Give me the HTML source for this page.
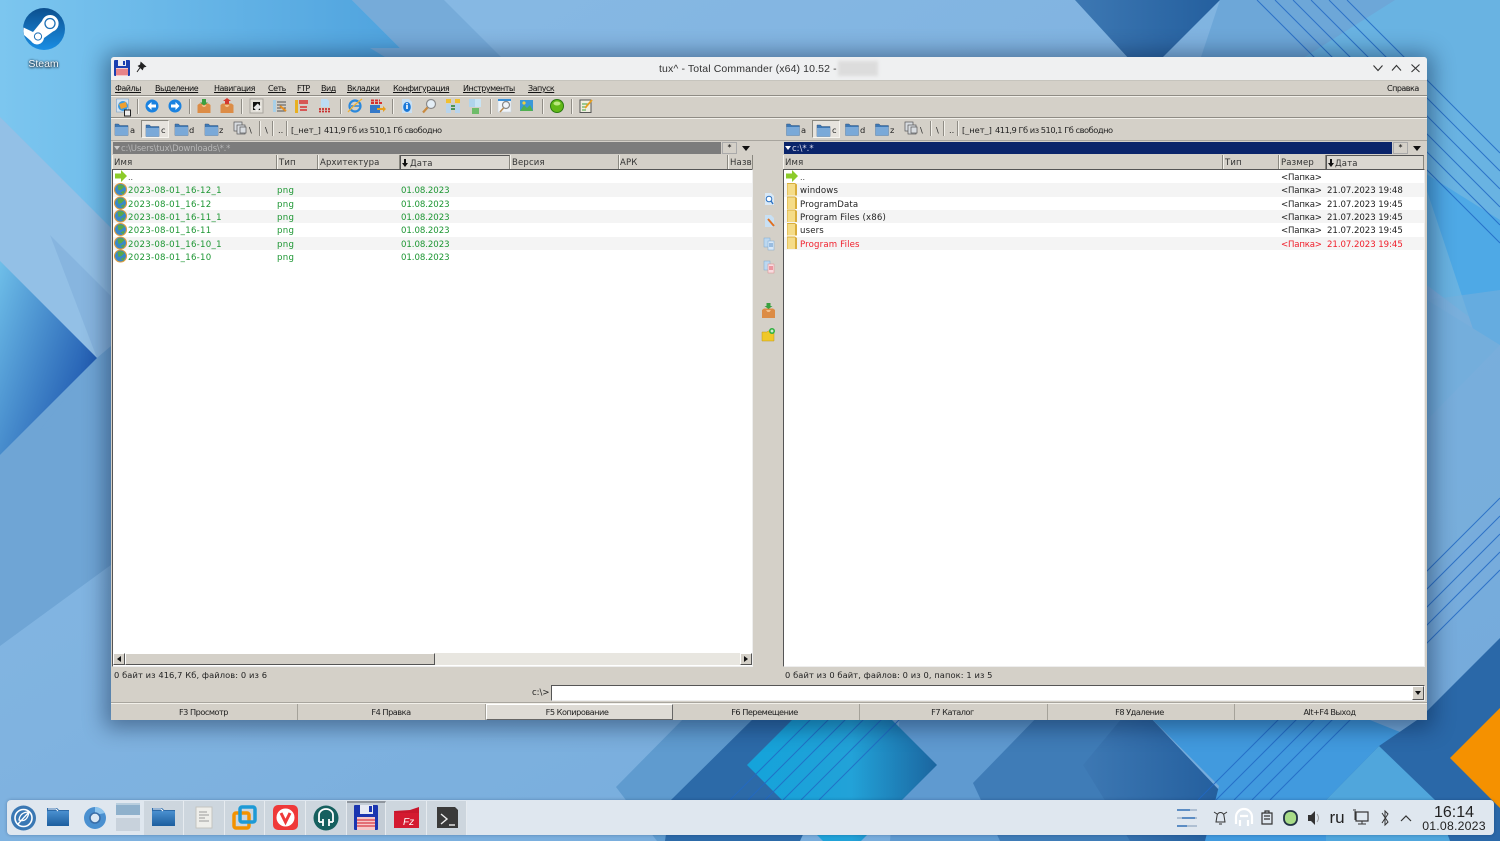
<!DOCTYPE html>
<html lang="ru"><head><meta charset="utf-8"><title>Total Commander</title>
<style>
html,body{margin:0;padding:0;width:1500px;height:841px;overflow:hidden;background:#7fb2df}
body{position:relative;font-family:"DejaVu Sans","Liberation Sans",sans-serif}
.a,.t{position:absolute}
.t{white-space:nowrap;line-height:12px;height:12px;font-size:8.5px;color:#222;filter:blur(.25px)}
#win{position:absolute;left:111px;top:57px;width:1316px;height:663px;background:#d4d0c8;box-shadow:0 2px 22px 6px rgba(0,20,50,.42);border-radius:3px 3px 0 0}
.m{font-size:8px;top:83px;letter-spacing:-.5px;text-decoration:underline;text-decoration-thickness:.5px;text-underline-offset:1px;color:#111}
.h{top:157px;font-size:8.5px;color:#333;letter-spacing:.17px}
.g{color:#1c9632;letter-spacing:.27px;font-size:8.6px}
.gd{color:#1c9632;letter-spacing:-.07px;font-size:8.6px}
.k{color:#222;letter-spacing:.14px;font-size:8.6px}
.kp{color:#222;letter-spacing:-.2px;font-size:8.6px}
.kd{color:#222;letter-spacing:-.06px;font-size:8.6px}
.r{color:#f0202c;letter-spacing:.14px;font-size:8.6px}
.rp{color:#f0202c;letter-spacing:-.2px;font-size:8.6px}
.rd{color:#f0202c;letter-spacing:-.06px;font-size:8.6px}
.d{font-size:8.3px;letter-spacing:-.05px;color:#222;top:123.5px}
.f{top:706px;font-size:8.2px;letter-spacing:-.5px;color:#222;text-align:center}
.sep{position:absolute;top:99px;width:1px;height:15px;background:#8f8c85;border-right:1px solid #f2f0ea}
.hc{position:absolute;top:155px;height:14px;background:#d4d0c8;border-right:1px solid #8a8880;border-left:1px solid #f4f2ec;box-sizing:border-box}
.row{position:absolute;height:13.33px;background:#f4f4f4}
svg.i{position:absolute;overflow:visible}
.fk{position:absolute;top:704px;height:16px;border-right:1px solid #a5a29a;box-sizing:border-box}
.cell{position:absolute;top:801px;height:34px;background:#cdd6de;border-right:1px solid #e6ebf0;box-sizing:border-box}
</style></head><body>

<!-- wallpaper -->
<svg class="a" style="left:0;top:0" width="1500" height="841" viewBox="0 0 1500 841">
<defs>
<linearGradient id="bg" x1="0" y1="0" x2="1" y2="1"><stop offset="0" stop-color="#8abbe5"/><stop offset="1" stop-color="#73a9da"/></linearGradient>
<linearGradient id="sky" x1="0" y1="0" x2="1" y2="0"><stop offset="0" stop-color="#7cc6ef"/><stop offset="1" stop-color="#4fa3de"/></linearGradient>
<linearGradient id="tri" x1="0" y1="0" x2="1" y2=".7"><stop offset="0" stop-color="#6fbfe9"/><stop offset="1" stop-color="#1a52ac"/></linearGradient>
<linearGradient id="cy" x1="0" y1="0" x2="1" y2="0"><stop offset="0" stop-color="#14a3da"/><stop offset=".55" stop-color="#22a2d8"/><stop offset="1" stop-color="#1b659f"/></linearGradient>
<linearGradient id="dk" x1="0" y1="0" x2="1" y2="0"><stop offset="0" stop-color="#3d78b3"/><stop offset="1" stop-color="#245f9e"/></linearGradient>
</defs>
<rect width="1500" height="841" fill="url(#bg)"/>
<polygon points="0,0 352,0 400,48 400,70 112,229 0,117" fill="url(#sky)"/>
<polygon points="352,0 444,0 510,66 400,66 370,48 400,48" fill="#76abd9"/>
<polygon points="0,117 130,247 130,391 97,358 0,261" fill="#93c0e6"/>
<polygon points="50,235 130,315 130,391 97,358" fill="#87b5df"/>
<polygon points="130,330 200,385 200,500 0,646 0,455 97,358" fill="#6fa5d5"/>
<polygon points="97,358 130,330 130,400 40,430" fill="#6fa5d5"/>
<polygon points="0,261 97,358 0,455" fill="url(#tri)"/>
<polygon points="1075,0 1220,0 1160,60 1130,60" fill="url(#dk)"/>
<polygon points="1220,0 1500,0 1500,200 1200,60" fill="#6da7d8"/>
<polygon points="1300,60 1395,0 1500,0 1500,340 1420,280" fill="#69b3e2"/>
<polygon points="1420,170 1500,220 1500,345 1480,350" fill="#4ea9e6"/>
<polygon points="1427,300 1500,345 1427,420" fill="#6fadde"/>
<polygon points="1500,290 1427,300 1427,580 1500,500" fill="#78aedb" opacity=".55"/>
<polygon points="900,712 1060,712 985,800 1000,841 890,841" fill="#5f9ad0"/>
<polygon points="616,787 690,712 800,712 740,845 660,845" fill="#5f9bcf"/>
<polygon points="760,712 671,800 665,841 800,841 860,712" fill="#2c6aa8"/>
<polygon points="747,765 842,670 937,765 842,860" fill="url(#cy)"/>
<polygon points="1042,712 973,783 1000,841 1200,841 1219,790 1145,712" fill="#3f7cb7"/>
<polygon points="1127,712 1083,765 1130,841 1215,841 1219,790 1145,712" fill="url(#dk)"/>
<polygon points="1145,712 1219,786 1205,841 1355,841 1420,740 1350,712" fill="#419ade"/>
<polygon points="1500,638 1420,718 1379,746 1326,800 1326,841 1500,841" fill="#2a68a8"/>
<polygon points="1379,746 1326,800 1326,841 1450,841 1435,800" fill="#50a6dc"/>
<polygon points="1450,758 1500,708 1500,808" fill="#f59100"/>
<g stroke="#2268c4" stroke-width="1" fill="none" opacity=".85">
<path d="M1257,0L1500,243M1275,0L1500,225M1293,0L1500,207M1311,0L1500,189M1329,0L1500,171M1347,0L1500,153"/>
<path d="M1500,498L1198,800M1500,516L1216,800M1500,534L1234,800M1500,552L1252,800M1500,570L1270,800"/>
<path d="M830,700L730,800M848,700L748,800M865,700L765,800M883,700L783,800M901,700L801,800M919,700L819,800"/>
</g>
<!-- steam -->
<defs><linearGradient id="st" x1="0" y1="0" x2="0" y2="1"><stop offset="0" stop-color="#0c4f8e"/><stop offset="1" stop-color="#1a8ee4"/></linearGradient></defs>
<circle cx="44" cy="29" r="21" fill="url(#st)"/>
<path d="M23.500,27.500 L33,32 L42,21 A8.500,8.500 0 1 1 53,31.500 L44,38 A7,7 0 0 1 31,41 L24,35 Q23,31 23.500,27.500 Z" fill="#fff"/>
<circle cx="50" cy="23.500" r="5" fill="#fff" stroke="#1d6fb5" stroke-width="1.300"/>
<circle cx="38" cy="36.500" r="3.600" fill="#fff" stroke="#1d6fb5" stroke-width="1"/>
</svg>
<div class="t" style="left:0;width:87px;text-align:center;top:58px;font:10.500px/12px 'Liberation Sans',sans-serif;color:#f4f8fb;text-shadow:0 1px 2px #123,0 0 2px #123">Steam</div>

<!-- window -->
<div id="win"></div>
<div class="a" style="left:111px;top:57px;width:1316px;height:23px;background:#eff0f1;border-radius:3px 3px 0 0"></div>
<div class="a" style="left:111px;top:80px;width:1316px;height:1px;background:#c6c4bd"></div>
<svg class="i" style="left:114px;top:60px" width="16" height="16" viewBox="0 0 16 16"><rect width="16" height="16" rx="1" fill="#1a3fb0"/><rect x="4" y="0" width="8" height="6" fill="#e8ecf4"/><rect x="9" y="1" width="2" height="4" fill="#1a3fb0"/><rect x="2" y="8" width="12" height="8" fill="#f6c8c8"/><path d="M2,10H14M2,12H14M2,14H14" stroke="#d8404a" stroke-width="1"/></svg>
<svg class="i" style="left:136px;top:62px" width="10" height="11" viewBox="0 0 10 11"><path d="M5,.5L9.500,4.500L7.500,5L6.500,7.500L2.500,4L4.500,3ZM3.800,6L1,10" stroke="#222" fill="#222" stroke-width="1"/></svg>
<div class="t" style="left:659px;top:62.500px;font:10.500px/12px 'Liberation Sans',sans-serif;color:#333;letter-spacing:.12px">tux^ - Total Commander (x64) 10.52 -</div>
<div class="a" style="left:838px;top:61px;width:40px;height:15px;background:#dcdcdc;filter:blur(1.5px)"></div>
<svg class="i" style="left:1372px;top:62px" width="50" height="12" viewBox="0 0 50 12"><g stroke="#333" stroke-width="1.100" fill="none"><path d="M1.500,3.500L6,8.500L10.500,3.500M20,8.500L24.500,3.500L29,8.500M39.500,2.500L47.500,10M47.500,2.500L39.500,10"/></g></svg>

<!-- menu -->
<div class="a" style="left:111px;top:95px;width:1316px;height:1px;background:#8f8c85"></div>
<div class="a" style="left:111px;top:96px;width:1316px;height:1px;background:#f2f0ea"></div>
<div class="t m" style="left:115px">Файлы</div>
<div class="t m" style="left:155px">Выделение</div>
<div class="t m" style="left:214px">Навигация</div>
<div class="t m" style="left:268px">Сеть</div>
<div class="t m" style="left:297px">FTP</div>
<div class="t m" style="left:321px">Вид</div>
<div class="t m" style="left:347px">Вкладки</div>
<div class="t m" style="left:393px">Конфигурация</div>
<div class="t m" style="left:463px">Инструменты</div>
<div class="t m" style="left:528px">Запуск</div>
<div class="t m" style="left:1387px;text-decoration:none">Справка</div>

<!-- toolbar -->
<div class="a" style="left:111px;top:117px;width:1316px;height:1px;background:#8f8c85"></div>
<div class="a" style="left:111px;top:118px;width:1316px;height:1px;background:#f2f0ea"></div>
<div class="sep" style="left:137px"></div><div class="sep" style="left:189px"></div><div class="sep" style="left:241px"></div><div class="sep" style="left:340px"></div><div class="sep" style="left:392px"></div><div class="sep" style="left:490px"></div><div class="sep" style="left:542px"></div><div class="sep" style="left:571px"></div>
<svg class="a" style="left:0;top:0" width="1500" height="841" viewBox="0 0 1500 841">
<defs>
<g id="arrowL"><circle r="6.500" fill="#1a82e0"/><path d="M4,-1.500H-.5V-4L-4.500,0L-.5,4V1.500H4Z" fill="#fff"/></g>
<g id="arrowR"><circle r="6.500" fill="#1a82e0"/><path d="M-4,-1.500H.5V-4L4.500,0L.5,4V1.500H-4Z" fill="#fff"/></g>
<g id="box"><path d="M-6.500,-2L-4.500,-3.500H4.500L6.500,-2V6H-6.500Z" fill="#dc8c46"/><path d="M-6.500,-2H-2.500L-1,0H1L2.500,-2H6.500" fill="#f3c18c"/></g>
<g id="fold"><path d="M-6.500,-5.500H-3L-1.500,-4H6.500V6H-6.500Z" fill="#3d78b5" stroke="#3a5a80" stroke-width=".5"/><path d="M-6.500,-2.500H6.500V6H-6.500Z" fill="#7aa9d8"/></g>
<g id="glob"><circle r="5.700" fill="#3a88c8"/><circle r="6" fill="none" stroke="#e09a3a" stroke-width="1.100"/><path d="M-3,-4Q1,-6 4,-3L1,0L-2,1ZM0,3L4,1L3,5Z" fill="#58a84a"/></g>
<g id="yf"><path d="M-5,-6.500H3L5,-5V6H-5Z" fill="#d9ae3c"/><path d="M-4.500,-5.500H3V6H-4.500Z" fill="#f5dc88"/></g>
<g id="grn"><path d="M-6,-2.500H0V-6L6,0L0,6V2.500H-6Z" fill="#8ccb2a"/></g>
</defs>
<!-- toolbar icons -->
<g transform="translate(123,106)"><rect x="-6.500" y="-7" width="12" height="13" fill="#d6e4f0" stroke="#78a0c8" stroke-width=".6"/><circle r="5" fill="#3a9ae0"/><path d="M-4,-2L3,-4L4,1L-2,3Z" fill="#f0a030"/><rect x="1.500" y="4" width="6" height="6" fill="#eee" stroke="#222"/></g>
<use href="#arrowL" x="152" y="106"/><use href="#arrowR" x="175" y="106"/>
<g transform="translate(204,107)"><use href="#box"/><path d="M-2,-3V-6.500H-4L0,-9.500L4,-6.500H2V-3Z" fill="#3aa040" transform="scale(1 -1) translate(0,11)"/></g>
<g transform="translate(227,107)"><use href="#box"/><path d="M-2,-3V-6H-4L0,-9L4,-6H2V-3Z" fill="#d43a30"/></g>
<rect x="250" y="99" width="13" height="14" fill="#e2dfd8" stroke="#a8a59e"/><rect x="253" y="102" width="7" height="8" fill="#111"/><path d="M255,104h5v6h-5z" fill="#fff" transform="rotate(45 257 107)" opacity=".9"/>
<g transform="translate(280,106)"><rect x="-7" y="-6" width="3" height="12" fill="#a8d0e8"/><path d="M-3,-4H6M-3,-1H6M-3,2H6M-3,5H6" stroke="#555"/><path d="M0,0L6,5" stroke="#e89020" stroke-width="2"/></g>
<g transform="translate(302,106)"><rect x="-7" y="-6" width="3" height="13" fill="#e8b020"/><rect x="-3" y="-6" width="9" height="4" fill="#d83030" opacity=".75"/><path d="M-2,1H5M-2,4H5" stroke="#d83030" stroke-width="1.500"/></g>
<g transform="translate(325,106)"><path d="M-4,-7H2L4,-5V1H-4Z" fill="#bcdcf4"/><path d="M-6,3H6M-6,5.500H6" stroke="#c83030" stroke-width="1.800" stroke-dasharray="2 1"/></g>
<g transform="translate(355,106)"><circle r="5.500" fill="none" stroke="#2a88dc" stroke-width="2.200"/><path d="M-4,0H5" stroke="#2a88dc" stroke-width="1.500"/><path d="M-7,6Q0,-2 7,-7" fill="none" stroke="#f0b030" stroke-width="1.300"/></g>
<g transform="translate(377,106)"><rect x="-7" y="-1" width="10" height="8" fill="#3478c8"/><path d="M-6,-5.500H3M-6,-3H6" stroke="#d83030" stroke-width="2" stroke-dasharray="3 1"/><path d="M0,2H6V0L9,3L6,6V4H0Z" fill="#e8a020"/></g>
<g transform="translate(407,106)"><path d="M-5,-7H2L5,-4V7H-5Z" fill="#c8e0f4"/><ellipse cy="1" rx="3.800" ry="5" fill="#1a78d8"/><rect x="-.8" y="-1" width="1.600" height="4" fill="#fff"/><rect x="-.8" y="-3" width="1.600" height="1.300" fill="#fff"/></g>
<g transform="translate(429,106)"><circle cx="2" cy="-2" r="4.500" fill="#e4eef6" stroke="#8a8a8a" stroke-width="1.200"/><path d="M-1.500,1.500L-6,6.500" stroke="#c88a40" stroke-width="2.200"/></g>
<g transform="translate(453,106)"><rect x="-7" y="-7" width="5" height="4" fill="#f0c030"/><rect x="2" y="-7" width="5" height="4" fill="#f0c030"/><rect x="-7" y="-2" width="5" height="9" fill="#b8d4ec"/><rect x="2" y="-2" width="5" height="9" fill="#b8d4ec"/><path d="M-2,0H2M2,3H-2" stroke="#208030" stroke-width="1.500"/></g>
<g transform="translate(475,106)"><rect x="-6" y="-7" width="6" height="8" fill="#b0d4ec"/><rect x="0" y="-7" width="6" height="8" fill="#c8e4f4"/><path d="M-3,3H4M-3,5H4M-3,7H4" stroke="#30b030" stroke-width="1.300"/></g>
<g transform="translate(505,106)"><rect x="-7" y="-7" width="13" height="13" fill="#f0f4f8" stroke="#c8d4e0" stroke-width=".6"/><rect x="-7" y="-7" width="13" height="2" fill="#3890d8"/><circle cx="1" cy="-1" r="3.500" fill="none" stroke="#888" stroke-width="1.200"/><path d="M-1.500,2L-5,6" stroke="#b88a50" stroke-width="1.500"/></g>
<g transform="translate(527,106)"><rect x="-7" y="-6" width="13" height="11" fill="#3a98d8"/><path d="M-7,5L-3,-1L0,2L3,-1L6,5Z" fill="#50b050"/><circle cx="-3" cy="-3" r="1.600" fill="#f0d040"/></g>
<circle cx="557" cy="106" r="6.500" fill="#62b818" stroke="#2a7a10" stroke-width="1"/><ellipse cx="557" cy="103.500" rx="3.500" ry="2" fill="#bce880"/>
<g transform="translate(586,106)"><rect x="-6" y="-6" width="11" height="12.500" fill="#f0eee0" stroke="#555"/><path d="M-4,-2H2M-4,1H1M-4,4H0" stroke="#40a040"/><path d="M-1,2L6,-6" stroke="#e8a020" stroke-width="1.800"/></g>
<!-- drive icons -->
<use href="#fold" x="121.500" y="129.500"/><use href="#fold" x="181.500" y="129.500"/><use href="#fold" x="211.500" y="129.500"/>
<use href="#fold" x="793" y="129.500"/><use href="#fold" x="852" y="129.500"/><use href="#fold" x="882" y="129.500"/>
<g fill="#d8dce0" stroke="#555" stroke-width=".7"><rect x="234" y="122" width="8" height="9"/><rect x="237" y="125" width="8" height="9"/><rect x="240" y="127" width="6" height="6"/><rect x="905" y="122" width="8" height="9"/><rect x="908" y="125" width="8" height="9"/><rect x="911" y="127" width="6" height="6"/></g>
</svg>
<!-- pressed drive -->
<div class="a" style="left:141px;top:120px;width:28px;height:18px;border:1px solid;border-color:#8a8880 #f6f4ee #f6f4ee #8a8880;background:#e6e3dd;box-sizing:border-box"></div>
<div class="a" style="left:812px;top:120px;width:28px;height:18px;border:1px solid;border-color:#8a8880 #f6f4ee #f6f4ee #8a8880;background:#e6e3dd;box-sizing:border-box"></div>
<svg class="a" style="left:0;top:0" width="1500" height="841" viewBox="0 0 1500 841"><use href="#fold" x="152.500" y="130.500"/><use href="#fold" x="823.500" y="130.500"/></svg>
<div class="t d" style="left:130px">a</div><div class="t d" style="left:161px">c</div><div class="t d" style="left:189px">d</div><div class="t d" style="left:219px">z</div><div class="t d" style="left:249px">\</div>
<div class="sep" style="left:259px;top:121px"></div><div class="t d" style="left:265px">\</div><div class="sep" style="left:272px;top:121px"></div><div class="t d" style="left:278px">..</div><div class="sep" style="left:286px;top:121px"></div>
<div class="t d" style="left:291px">[_нет_]</div><div class="t d" style="left:324px;letter-spacing:-.49px">411,9 Гб из 510,1 Гб свободно</div>
<div class="t d" style="left:801px">a</div><div class="t d" style="left:832px">c</div><div class="t d" style="left:860px">d</div><div class="t d" style="left:890px">z</div><div class="t d" style="left:920px">\</div>
<div class="sep" style="left:930px;top:121px"></div><div class="t d" style="left:936px">\</div><div class="sep" style="left:943px;top:121px"></div><div class="t d" style="left:949px">..</div><div class="sep" style="left:957px;top:121px"></div>
<div class="t d" style="left:962px">[_нет_]</div><div class="t d" style="left:995px;letter-spacing:-.49px">411,9 Гб из 510,1 Гб свободно</div>

<!-- separator under drive bar -->
<div class="a" style="left:111px;top:140px;width:1316px;height:1px;background:#a8a59e"></div>

<!-- path bars -->
<div class="a" style="left:113px;top:142px;width:608px;height:12px;background:#7c7c7c"></div>
<div class="t" style="left:121px;top:142.500px;color:#b8b8b8;font-size:8.5px;letter-spacing:-.2px">c:\Users\tux\Downloads\*.*</div>
<svg class="i" style="left:114px;top:146px" width="6" height="4"><path d="M0,0H6L3,4Z" fill="#ccc"/></svg>
<div class="a" style="left:722px;top:142px;width:15px;height:12px;background:#d4d0c8;border:1px solid #aaa;box-sizing:border-box;font-size:8px;line-height:10px;text-align:center">*</div>
<svg class="i" style="left:742px;top:146px" width="8" height="5"><path d="M0,0H8L4,5Z" fill="#111"/></svg>
<div class="a" style="left:784px;top:142px;width:608px;height:12px;background:#0a246a"></div>
<div class="t" style="left:792px;top:142.500px;color:#dde;font-size:8.5px">c:\*.*</div>
<svg class="i" style="left:785px;top:146px" width="6" height="4"><path d="M0,0H6L3,4Z" fill="#fff"/></svg>
<div class="a" style="left:1393px;top:142px;width:15px;height:12px;background:#d4d0c8;border:1px solid #aaa;box-sizing:border-box;font-size:8px;line-height:10px;text-align:center">*</div>
<svg class="i" style="left:1413px;top:146px" width="8" height="5"><path d="M0,0H8L4,5Z" fill="#111"/></svg>

<!-- panels -->
<div class="a" style="left:112px;top:169px;width:641px;height:498px;background:#fff;border:1px solid;border-color:#555 #eee #eee #555;box-sizing:border-box"></div>
<div class="a" style="left:783px;top:169px;width:642px;height:498px;background:#fff;border:1px solid;border-color:#555 #eee #eee #555;box-sizing:border-box"></div>
<div class="row" style="left:113px;top:183.300px;width:639px"></div><div class="row" style="left:113px;top:210px;width:639px"></div><div class="row" style="left:113px;top:236.700px;width:639px"></div>
<div class="row" style="left:784px;top:183.300px;width:640px"></div><div class="row" style="left:784px;top:210px;width:640px"></div><div class="row" style="left:784px;top:236.700px;width:640px"></div>

<!-- headers -->
<div class="hc" style="left:112px;width:165px"></div><div class="hc" style="left:277px;width:41px"></div><div class="hc" style="left:318px;width:82px"></div>
<div class="hc" style="left:400px;width:110px;border-left:1px solid #555;border-top:1px solid #555;background:#dbd8d1"></div>
<div class="hc" style="left:510px;width:109px"></div><div class="hc" style="left:619px;width:109px"></div><div class="hc" style="left:728px;width:25px"></div>
<div class="hc" style="left:783px;width:440px"></div><div class="hc" style="left:1223px;width:56px"></div><div class="hc" style="left:1279px;width:47px"></div>
<div class="hc" style="left:1326px;width:98px;border-left:1px solid #555;border-top:1px solid #555;background:#dbd8d1"></div>
<div class="t h" style="left:114px">Имя</div><div class="t h" style="left:279px">Тип</div><div class="t h" style="left:320px">Архитектура</div>
<div class="t h" style="left:410px;top:158px">Дата</div><div class="t h" style="left:512px">Версия</div><div class="t h" style="left:620px">АРК</div>
<div class="t h" style="left:730px;width:23px;overflow:hidden">Назв</div>
<div class="t h" style="left:785px">Имя</div><div class="t h" style="left:1225px">Тип</div><div class="t h" style="left:1281px">Размер</div><div class="t h" style="left:1335px;top:158px">Дата</div>
<svg class="i" style="left:402px;top:159px" width="6" height="8"><path d="M2,0H4V4H6L3,8L0,4H2Z" fill="#111"/></svg>
<svg class="i" style="left:1328px;top:159px" width="6" height="8"><path d="M2,0H4V4H6L3,8L0,4H2Z" fill="#111"/></svg>

<!-- files left -->
<svg class="a" style="left:0;top:0" width="1500" height="841" viewBox="0 0 1500 841">
<use href="#grn" x="121" y="176"/><use href="#grn" x="792" y="176"/>
<use href="#glob" x="120.500" y="189.500"/><use href="#glob" x="120.500" y="203"/><use href="#glob" x="120.500" y="216"/><use href="#glob" x="120.500" y="229.500"/><use href="#glob" x="120.500" y="243"/><use href="#glob" x="120.500" y="256"/>
<use href="#yf" x="792" y="189.500"/><use href="#yf" x="792" y="203"/><use href="#yf" x="792" y="216"/><use href="#yf" x="792" y="229.500"/><use href="#yf" x="792" y="243"/>
<!-- middle buttons -->
<g transform="translate(769,199)"><path d="M-4,-6H2L5,-3V6H-4Z" fill="#d8e8f6"/><circle cx="0" cy="0" r="2.800" fill="#fff" stroke="#2a70c0"/><path d="M2,2L4,5" stroke="#2a70c0" stroke-width="1.300"/></g>
<g transform="translate(769,221)"><path d="M-4,-6H2L5,-3V6H-4Z" fill="#c8e0f4"/><path d="M-1,-2L5,5" stroke="#e07020" stroke-width="2"/></g>
<g transform="translate(769,244)"><rect x="-5" y="-6" width="6" height="9" fill="#bcd8f0" stroke="#7aa6d0" stroke-width=".5"/><rect x="-1" y="-3" width="6" height="9" fill="#d8e8f8" stroke="#7aa6d0" stroke-width=".5"/><path d="M0,0H4M0,2H4" stroke="#5a90c8"/></g>
<g transform="translate(769,267)"><rect x="-5" y="-6" width="6" height="9" fill="#bcd8f0" stroke="#7aa6d0" stroke-width=".5"/><rect x="-1" y="-3" width="6" height="9" fill="#f8dce0" stroke="#d88" stroke-width=".5"/><path d="M0,0H4M0,2H4" stroke="#e05060"/></g>
<g transform="translate(768.500,312)"><use href="#box"/><path d="M-2,-3V-6H-4L0,-9L4,-6H2V-3Z" fill="#3aa040" transform="scale(1 -1) translate(0,12)"/></g>
<g transform="translate(768,335)"><path d="M-6,-3H-1L0,-4H6V6H-6Z" fill="#f0c828" stroke="#c09818" stroke-width=".5"/><circle cx="4" cy="-4" r="3" fill="#30b040"/><path d="M2.500,-4H5.500M4,-5.500V-2.500" stroke="#fff"/></g>
</svg>
<div class="t" style="left:128px;top:172px;font-size:8px;color:#444">..</div>
<div class="t g" style="left:128px;top:185px">2023-08-01_16-12_1</div><div class="t g" style="left:277px;top:185px">png</div><div class="t gd" style="left:401px;top:185px">01.08.2023</div>
<div class="t g" style="left:128px;top:198.500px">2023-08-01_16-12</div><div class="t g" style="left:277px;top:198.500px">png</div><div class="t gd" style="left:401px;top:198.500px">01.08.2023</div>
<div class="t g" style="left:128px;top:211.500px">2023-08-01_16-11_1</div><div class="t g" style="left:277px;top:211.500px">png</div><div class="t gd" style="left:401px;top:211.500px">01.08.2023</div>
<div class="t g" style="left:128px;top:225px">2023-08-01_16-11</div><div class="t g" style="left:277px;top:225px">png</div><div class="t gd" style="left:401px;top:225px">01.08.2023</div>
<div class="t g" style="left:128px;top:238.500px">2023-08-01_16-10_1</div><div class="t g" style="left:277px;top:238.500px">png</div><div class="t gd" style="left:401px;top:238.500px">01.08.2023</div>
<div class="t g" style="left:128px;top:251.500px">2023-08-01_16-10</div><div class="t g" style="left:277px;top:251.500px">png</div><div class="t gd" style="left:401px;top:251.500px">01.08.2023</div>

<!-- files right -->
<div class="t" style="left:800px;top:172px;font-size:8px;color:#444">..</div><div class="t kp" style="left:1281px;top:171.500px">&lt;Папка&gt;</div>
<div class="t k" style="left:800px;top:185px">windows</div><div class="t kp" style="left:1281px;top:185px">&lt;Папка&gt;</div><div class="t kd" style="left:1327px;top:185px">21.07.2023 19:48</div>
<div class="t k" style="left:800px;top:198.500px">ProgramData</div><div class="t kp" style="left:1281px;top:198.500px">&lt;Папка&gt;</div><div class="t kd" style="left:1327px;top:198.500px">21.07.2023 19:45</div>
<div class="t k" style="left:800px;top:211.500px">Program Files (x86)</div><div class="t kp" style="left:1281px;top:211.500px">&lt;Папка&gt;</div><div class="t kd" style="left:1327px;top:211.500px">21.07.2023 19:45</div>
<div class="t k" style="left:800px;top:225px">users</div><div class="t kp" style="left:1281px;top:225px">&lt;Папка&gt;</div><div class="t kd" style="left:1327px;top:225px">21.07.2023 19:45</div>
<div class="t r" style="left:800px;top:238.500px">Program Files</div><div class="t rp" style="left:1281px;top:238.500px">&lt;Папка&gt;</div><div class="t rd" style="left:1327px;top:238.500px">21.07.2023 19:45</div>

<!-- scrollbar -->
<div class="a" style="left:113px;top:653px;width:639px;height:12px;background:#e8e6e0"></div>
<div class="a" style="left:113px;top:653px;width:12px;height:12px;background:#d4d0c8;border:1px solid;border-color:#fff #555 #555 #fff;box-sizing:border-box"></div>
<div class="a" style="left:125px;top:653px;width:310px;height:12px;background:#d4d0c8;border:1px solid;border-color:#fff #555 #555 #fff;box-sizing:border-box"></div>
<div class="a" style="left:740px;top:653px;width:12px;height:12px;background:#d4d0c8;border:1px solid;border-color:#fff #555 #555 #fff;box-sizing:border-box"></div>
<svg class="i" style="left:117px;top:656px" width="4" height="6"><path d="M4,0V6L0,3Z" fill="#111"/></svg>
<svg class="i" style="left:744px;top:656px" width="4" height="6"><path d="M0,0V6L4,3Z" fill="#111"/></svg>

<!-- status -->
<div class="t" style="left:114px;top:669px;font-size:8.300px;letter-spacing:.09px">0 байт из 416,7 Кб, файлов: 0 из 6</div>
<div class="t" style="left:785px;top:669px;font-size:8.300px;letter-spacing:.09px">0 байт из 0 байт, файлов: 0 из 0, папок: 1 из 5</div>

<!-- command line -->
<div class="t" style="left:532px;top:687px;font-size:8.500px">c:\&gt;</div>
<div class="a" style="left:551px;top:685px;width:874px;height:16px;background:#fff;border:1px solid;border-color:#555 #eee #eee #555;box-sizing:border-box"></div>
<div class="a" style="left:1412px;top:686px;width:12px;height:14px;background:#d4d0c8;border:1px solid;border-color:#fff #555 #555 #fff;box-sizing:border-box"></div>
<svg class="i" style="left:1415px;top:691px" width="6" height="4"><path d="M0,0H6L3,4Z" fill="#111"/></svg>

<!-- fkeys -->
<div class="a" style="left:111px;top:702px;width:1316px;height:1px;background:#a8a59e"></div>
<div class="a" style="left:111px;top:703px;width:1316px;height:1px;background:#f2f0ea"></div>
<div class="fk" style="left:111px;width:187px"></div><div class="fk" style="left:298px;width:188px"></div>
<div class="fk" style="left:486px;width:187px;background:#dedbd5;border:1px solid;border-color:#fff #666 #666 #fff"></div>
<div class="fk" style="left:673px;width:187px"></div><div class="fk" style="left:860px;width:188px"></div><div class="fk" style="left:1048px;width:187px"></div>
<div class="t f" style="left:111px;width:185px">F3 Просмотр</div><div class="t f" style="left:298px;width:186px">F4 Правка</div><div class="t f" style="left:486px;width:182px">F5 Копирование</div><div class="t f" style="left:671px;width:187px">F6 Перемещение</div><div class="t f" style="left:859px;width:187px">F7 Каталог</div><div class="t f" style="left:1046px;width:187px">F8 Удаление</div><div class="t f" style="left:1236px;width:187px">Alt+F4 Выход</div>

<!-- taskbar -->
<div class="a" style="left:7px;top:800px;width:1487px;height:35px;background:#dfe7ef;border-radius:4px;box-shadow:0 0 3px rgba(0,30,70,.3)"></div>
<div class="cell" style="left:144px;width:40px"></div><div class="cell" style="left:184px;width:41px"></div><div class="cell" style="left:225px;width:40px"></div><div class="cell" style="left:265px;width:41px"></div><div class="cell" style="left:306px;width:41px"></div>
<div class="cell" style="left:347px;width:39px;background:#c4cdd6;border-top:2px solid #8f969e"></div>
<div class="cell" style="left:386px;width:41px"></div><div class="cell" style="left:427px;width:40px"></div>
<svg class="a" style="left:0;top:0" width="1500" height="841" viewBox="0 0 1500 841">
<defs><linearGradient id="fb" x1="0" y1="0" x2="0" y2="1"><stop offset="0" stop-color="#4a90d0"/><stop offset="1" stop-color="#1c5e9e"/></linearGradient></defs>
<circle cx="23.500" cy="818" r="12.500" fill="#3a78b4"/><circle cx="23.500" cy="818" r="8.500" fill="none" stroke="#fff" stroke-width="1.600"/><path d="M18,824L29,812M29,812Q20,812 19,820Q27,823 29,812" fill="none" stroke="#fff" stroke-width="1.300"/>
<path d="M47,808H57L59,810H69V826H47Z" fill="#2c6aa8"/><rect x="47" y="811" width="22" height="15" rx="1" fill="url(#fb)"/><path d="M48,809H56L58,811" stroke="#fff" fill="none"/>
<circle cx="95" cy="818" r="11" fill="#4a90d0"/><path d="M95,807A11,11 0 0 1 105,813L95,815Z" fill="#8cc4ee"/><circle cx="95" cy="818" r="5" fill="#dbe8f4" stroke="#3a6ea8" stroke-width="1.600"/>
<rect x="116" y="803" width="24" height="12" fill="#8fb1cc"/><rect x="116" y="818" width="24" height="13" fill="#c8d2dc"/><rect x="116" y="803" width="24" height="2" fill="#b8cede"/>
<path d="M152,808H162L164,810H175V826H152Z" fill="#2c6aa8"/><rect x="152" y="811" width="23" height="15" rx="1" fill="url(#fb)"/><path d="M153,809H161L163,811" stroke="#fff" fill="none"/>
<rect x="196" y="807" width="16" height="21" fill="#eeeeea" stroke="#c4c4c0"/><path d="M199,812H207M199,815H209M199,818H205M199,821H209" stroke="#999"/>
<rect x="234" y="813" width="15" height="15" rx="2" fill="none" stroke="#f39200" stroke-width="3.500"/><rect x="240" y="807" width="15" height="15" rx="2" fill="none" stroke="#1d9ad6" stroke-width="3.500"/>
<rect x="273" y="805" width="25" height="25" rx="5" fill="#ef3939"/><circle cx="285.500" cy="817.500" r="9" fill="#fff"/><path d="M281,813L285.500,822L290,813" fill="none" stroke="#ef3939" stroke-width="3"/>
<circle cx="326" cy="818" r="12.500" fill="#16605f"/><path d="M319,822V815A7,6 0 0 1 333,815V822M323,826V819M329,826V819M319,822H323M329,822H333" fill="none" stroke="#fff" stroke-width="1.800"/>
<rect x="354" y="805" width="24" height="25" rx="1" fill="#1a35b0"/><rect x="360" y="805" width="13" height="9" fill="#e6eaf4"/><rect x="369" y="806" width="3" height="6" fill="#1a35b0"/><rect x="357" y="817" width="18" height="13" fill="#f6c8c8"/><path d="M357,820H375M357,823H375M357,826H375" stroke="#d83a44" stroke-width="1.300"/>
<path d="M394,811L410,810L419,807V827H395Z" fill="#c8162c"/><path d="M394,813H419V828H394Z" fill="#d41a30"/><text x="403" y="825" font-family="Liberation Sans" font-size="10" font-style="italic" fill="#fff">Fz</text>
<path d="M437,807H455L458,810V828H437Z" fill="#3a3a3a"/><path d="M441,814L447,819L441,824" fill="none" stroke="#eee" stroke-width="1.400"/><path d="M449,825H455" stroke="#eee" stroke-width="1.400"/>
<!-- tray -->
<g stroke-width="1.600"><path d="M1177,810H1197M1177,818H1197M1177,826H1197" stroke="#9fb4ca"/><path d="M1177,810H1190M1182,818H1195M1177,826H1187" stroke="#3b78bc"/></g>
<g fill="none" stroke="#333" stroke-width="1"><path d="M1216,822H1225L1224,816A3.500,3.500 0 0 0 1217,816ZM1219,824H1222M1214,812L1217,814M1227,812L1224,814"/></g>
<path d="M1236,824V817A8,8 0 0 1 1252,817V824M1240,826V820M1248,826V820M1240,816H1248" fill="none" stroke="#fff" stroke-width="2.200"/>
<path d="M1262,813H1272V824H1262Z M1265,811H1269V813H1265Z M1264,816H1270M1264,819H1270" fill="none" stroke="#333" stroke-width="1.200"/>
<rect x="1284" y="811" width="13" height="14" rx="6" fill="#a8dc88" stroke="#234" stroke-width="1.800"/>
<path d="M1308,815H1311L1315,811V825L1311,821H1308Z" fill="#333"/><path d="M1317,814Q1320,818 1317,822" stroke="#999" fill="none"/>
<rect x="1356" y="812" width="12" height="9" fill="none" stroke="#333" stroke-width="1.200"/><path d="M1355,811V820M1353,810H1356M1362,821V824M1358,824H1366" stroke="#333" fill="none"/>
<path d="M1382,813L1388,822L1385,825V811L1388,814L1382,823" fill="none" stroke="#333" stroke-width="1"/>
<path d="M1401,821L1406,816L1411,821" fill="none" stroke="#333" stroke-width="1.200"/>
</svg>
<div class="t" style="left:1322px;top:809px;width:30px;text-align:center;height:18px;font:17px/18px 'Liberation Sans',sans-serif;color:#222">ru</div>
<div class="t" style="left:1414px;top:804px;width:80px;text-align:center;height:17px;font:16px/17px 'Liberation Sans',sans-serif;color:#222">16:14</div>
<div class="t" style="left:1414px;top:819px;width:80px;text-align:center;height:14px;font:12.300px/14px 'Liberation Sans',sans-serif;color:#222;letter-spacing:.2px">01.08.2023</div>
</body></html>
